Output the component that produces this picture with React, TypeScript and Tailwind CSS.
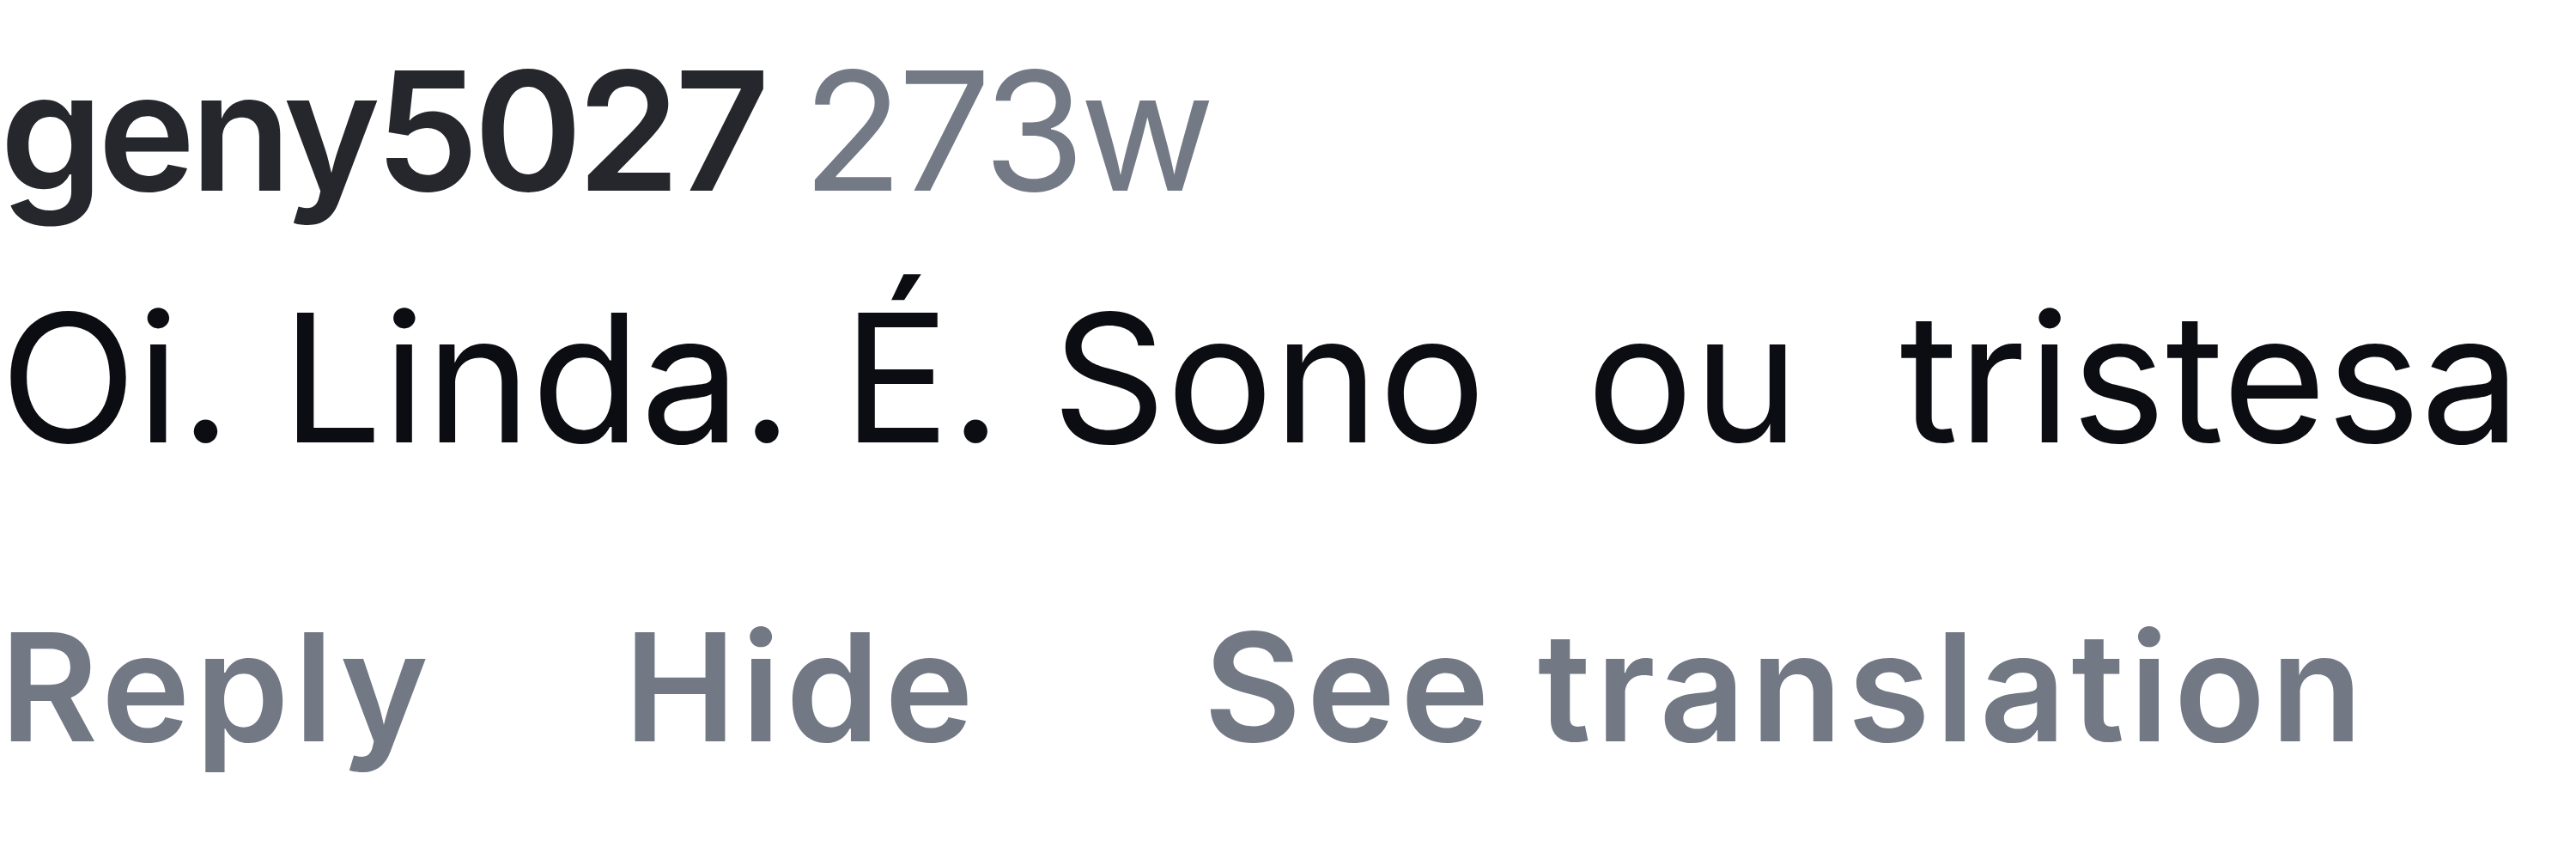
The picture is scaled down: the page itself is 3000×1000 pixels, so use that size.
import React from "react";

export default function App() {
  return (
    <div className="w-[3000px] h-[1000px] bg-white overflow-hidden" style={{ fontFamily: "Inter, 'Liberation Sans', sans-serif" }}>
      <div className="pt-[8px] flex items-baseline text-[192px] leading-[289px] whitespace-pre tracking-[-6px]">
        <span className="font-semibold text-[#26272c]">geny5027</span>
        <span className="ml-[44px] text-[#737a86]">273w</span>
      </div>
      <div className="text-[208px] leading-[284px] text-[#0c0d12] whitespace-pre">
        Oi. Linda. É. Sono  ou  tristesa
      </div>
      <div className="mt-[112px] flex text-[175px] leading-[212px] font-semibold text-[#727884] tracking-[6px]">
        <span>Reply</span>
        <span className="ml-[222px]">Hide</span>
        <span className="ml-[262px]">See translation</span>
      </div>
    </div>
  );
}
